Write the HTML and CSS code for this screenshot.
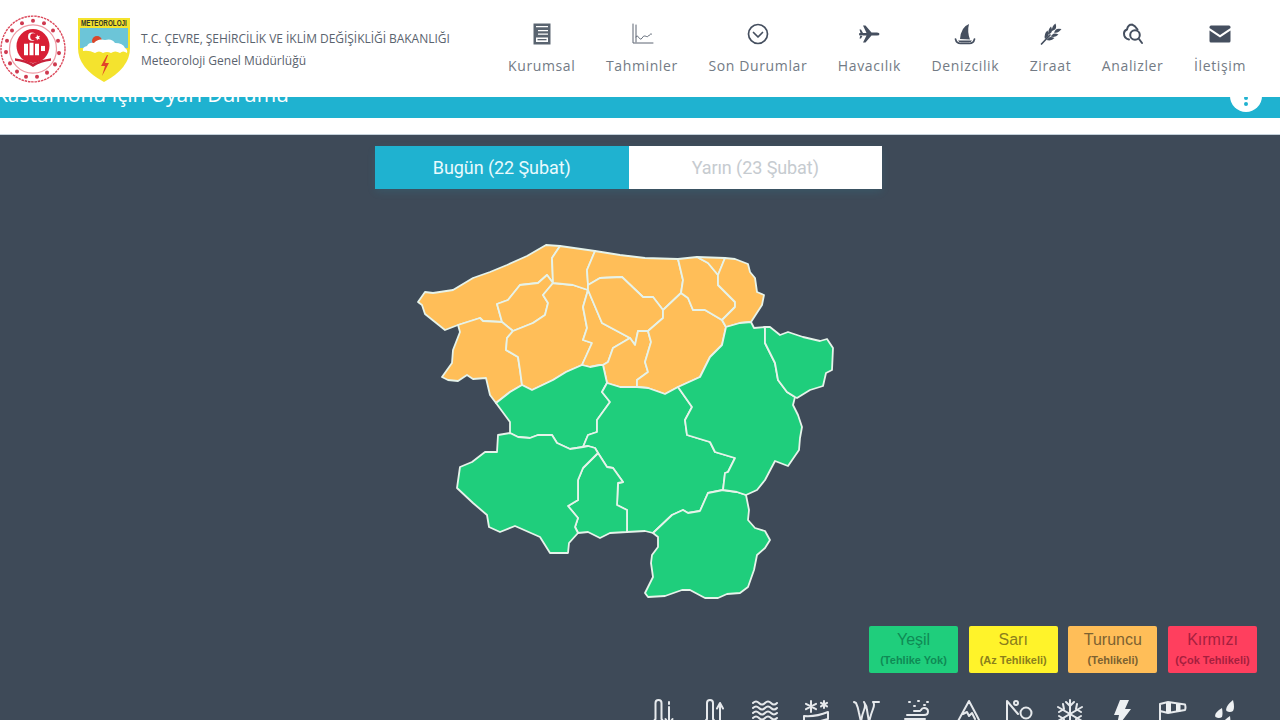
FILE: index.html
```html
<!DOCTYPE html>
<html lang="tr">
<head>
<meta charset="utf-8">
<title>Kastamonu İçin Uyarı Durumu</title>
<link rel="stylesheet" href="styles.css">
</head>
<body>
<header class="site-header">
  <div class="brand">
    <svg class="emblem" viewBox="0 0 66 72" preserveAspectRatio="none" aria-hidden="true">
      <circle cx="33" cy="36" r="32" fill="#fff" stroke="#dc4a5c" stroke-width="1.400" stroke-dasharray="2.500 .8"/>
      <circle cx="33" cy="36" r="23.500" fill="none" stroke="#ee9aa4" stroke-width="1.200"/>
      <g fill="#cf3a50">
        <circle cx="33" cy="8.500" r="2"/><circle cx="44" cy="11" r="2"/><circle cx="53" cy="18" r="2"/><circle cx="58" cy="28" r="2"/><circle cx="59" cy="40" r="2"/><circle cx="55" cy="51" r="2"/><circle cx="47" cy="59" r="2"/><circle cx="37" cy="63" r="2"/><circle cx="26" cy="63" r="2"/><circle cx="17" cy="58" r="2"/><circle cx="10" cy="50" r="2"/><circle cx="6" cy="39" r="2"/><circle cx="7" cy="28" r="2"/><circle cx="12" cy="18" r="2"/><circle cx="22" cy="11" r="2"/>
      </g>
      <circle cx="33" cy="33" r="16.500" fill="#d81f35"/>
      <circle cx="32" cy="24" r="4" fill="#fff"/><circle cx="33.500" cy="24" r="3.300" fill="#d81f35"/>
      <path d="M37 22l1 1.500 2-.5-1 2 1 1.500-2-.3-1 1.500-.3-2-1.700-.7 1.700-.8z" fill="#fff"/>
      <path d="M24 31h4v11h-4zM29.500 30h4v12h-4zM35 31h4v11h-4z" fill="#fff"/>
      <path d="M41 33h4v5h-4z" fill="#fff"/>
      <path d="M15 45q9 1 18 5 9-4 18-5v2.500q-10 1-18 6-8-5-18-6z" fill="#c8213a"/>
    </svg>
    <svg class="shield" viewBox="0 0 52 64" aria-hidden="true">
      <path d="M0 0h52v30q0 20-26 34Q0 50 0 30z" fill="#f4e32e"/>
      <path d="M2 10h48v20H2z" fill="#6cc5d8"/>
      <text class="shield-text" x="37" y="8.500" text-anchor="middle" transform="scale(.7 1)">METEOROLOJI</text>
      <circle cx="19" cy="23" r="5" fill="#d9472b"/>
      <path d="M5 33q-1-4 4-5 2-4 7-3 4-5 11-3 7-2 10 3 8 0 10 5 3 2 2 5-4-3-7 0-5-3-9 0-4-2-8 0-4-3-8 0-6-3-12-2z" fill="#fff"/>
      <path d="M29 37l-6 11h4l-3 10 7-13h-4l3-8z" fill="#e2452a"/>
    </svg>
    <div class="brand-text">
      <div class="ministry">T.C. ÇEVRE, ŞEHİRCİLİK VE İKLİM DEĞİŞİKLİĞİ BAKANLIĞI</div>
      <div class="directorate">Meteoroloji Genel Müdürlüğü</div>
    </div>
  </div>
  <nav class="main-nav">
    <a class="nav-item">
      <svg class="nav-icon" viewBox="0 0 24 24" aria-hidden="true"><path class="fill soft" d="M3.500 1.500h17v21h-17z"/><path class="knock" d="M6 4h12v1.200H6zM8 8h10v1.200H8zM8 11.500h10v1.200H8zM6 15.500h12V20H6z"/><path class="fill soft" d="M7.500 17h9v1.300h-9z"/></svg>
      <span>Kurumsal</span>
    </a>
    <a class="nav-item">
      <svg class="nav-icon" viewBox="0 0 24 24" aria-hidden="true"><path class="line thin" d="M3 2v19h20M6 3v17M6 15c1.500-4 3 3 5 2 2-1 1.500-3 3.500-3s2.500 1.500 4 0 2-2.500 3-2"/></svg>
      <span>Tahminler</span>
    </a>
    <a class="nav-item">
      <svg class="nav-icon" viewBox="0 0 24 24" aria-hidden="true"><circle class="line" cx="12" cy="12" r="9.500"/><path class="line" d="M7.500 10.500l4.500 4.500 4.500-4.500"/></svg>
      <span>Son Durumlar</span>
    </a>
    <a class="nav-item">
      <svg class="nav-icon" viewBox="0 0 24 24" aria-hidden="true"><path class="fill" d="M2 12q0-1 1-1h6.500L6 3.500h2.500L14.500 10.500H20q2.500 0 2.500 1.500T20 13.500h-5.500L8.500 20.500H6l3.500-7H3q-1 0-1-1.500zM2.500 7.500H4L6 11H3.500zM2.500 16.500H4L6 13H3.500z"/></svg>
      <span>Havacılık</span>
    </a>
    <a class="nav-item">
      <svg class="nav-icon" viewBox="0 0 24 24" aria-hidden="true"><path class="fill" d="M16 2Q8 5 7 17l10 .5q-3-8-1-15.500z"/><path class="line" d="M2.500 17q1 4.500 5 4.500h9q4 0 5-4.500"/><path class="fill" d="M5 18.500h14q-1 2-3 2H8q-2 0-3-2z"/></svg>
      <span>Denizcilik</span>
    </a>
    <a class="nav-item">
      <svg class="nav-icon" viewBox="0 0 24 24" aria-hidden="true"><path class="line" d="M2.500 22L11 13"/><path class="fill" d="M6 17q-1.500-5 2.500-8.500 2 4 0 6.500zM7.500 18q5 1.500 8-2-4.500-2-6 0zM9.500 12.500Q8.500 8 12 4.500q2 4 0 6.500zM11.500 14.500q5 1.500 8-2-4.500-2-6 0zM13 9q-.5-5 3.500-7.500 1.500 4-.5 6zM15 10.500q4.500 1 7.500-3.500-4.500-1-6 1z"/></svg>
      <span>Ziraat</span>
    </a>
    <a class="nav-item">
      <svg class="nav-icon bold-icon" viewBox="0 0 24 24" aria-hidden="true"><path class="line" d="M11 2.500q3 1 5.500 5M8 17.500Q3 16.500 3 11.500q0-3 3-4 1-5 5-5"/><circle class="line" cx="14" cy="13" r="4.800"/><path class="line" d="M18 17l3 4"/></svg>
      <span>Analizler</span>
    </a>
    <a class="nav-item">
      <svg class="nav-icon" viewBox="0 0 24 24" aria-hidden="true"><path class="fill" d="M1.500 5q0-1.500 1.500-1.500h18q1.500 0 1.500 1.500v1L12 13 1.500 6zM1.500 8.500L12 15.500l10.500-7V19q0 1.500-1.500 1.500H3q-1.500 0-1.500-1.500z"/></svg>
      <span>İletişim</span>
    </a>
  </nav>
</header>

<main class="page">
  <section class="title-bar">
    <h1 class="title">Kastamonu İçin Uyarı Durumu</h1>
    <span class="info-badge"><i></i><i></i></span>
  </section>
  <div class="title-gap"></div>

  <section class="warning-panel">
    <div class="tabs">
      <button class="tab tab-active">Bugün (22 Şubat)</button>
      <button class="tab">Yarın (23 Şubat)</button>
    </div>

    <svg class="map" viewBox="410 240 430 365" role="img" aria-label="Kastamonu bölgesi uyarı haritası">
      <g class="orange">
        <path d="M418 302L425 292 433 293 453 290 473 278 490 272 507 265 527 256 546 245 560 246 552 258 553 283 547 275 538 283 520 285 508 300 497 304 502 322 483 321 480 318 458 325 445 330 435 322 425 314 422 305Z"/>
        <path d="M553 283L543 295 548 303 545 315 533 323 513 331 502 322 497 304 508 300 520 285 538 283 547 275Z"/>
        <path d="M458 325L480 318 483 321 502 322 513 331 507 338 506 350 518 357 520 370 522 385 510 392 496 403 490 395 486 378 473 379 467 375 458 381 448 380 442 377 452 363 453 350 460 332Z"/>
        <path d="M553 283L573 285 588 290 583 307 587 328 583 340 592 343 582 365 566 372 553 380 532 390 522 385 520 370 518 357 506 350 507 338 513 331 533 323 545 315 548 303 543 295Z"/>
        <path d="M560 246L595 251 587 270 588 285 588 290 573 285 553 283 552 258Z"/>
        <path d="M588 290L602 323 630 338 613 348 608 362 603 365 600 365 590 367 582 365 592 343 583 340 587 328 583 307Z"/>
        <path d="M595 251L620 255 645 258 678 259 683 280 681 293 663 310 653 297 643 297 622 277 600 278 588 285 587 270Z"/>
        <path d="M588 285L600 278 622 277 643 297 653 297 663 310 663 318 648 331 638 331 635 345 630 338 602 323 588 290Z"/>
        <path d="M630 338L635 345 638 331 648 331 651 342 645 362 648 372 637 380 637 387 620 387 607 383 603 365 608 362 613 348Z"/>
        <path d="M663 310L681 293 688 298 693 310 705 310 722 320 726 327 722 345 710 357 700 377 678 387 665 394 648 388 637 387 637 380 648 372 645 362 651 342 648 331 663 318Z"/>
        <path d="M678 259L697 257 708 263 718 275 718 285 735 302 735 307 722 320 705 310 693 310 688 298 681 293 683 280Z"/>
        <path d="M697 257L725 258 718 275 708 263Z"/>
        <path d="M725 258L735 259 748 264 750 272 755 278 757 292 764 295 762 305 751 322 740 323 726 327 722 320 735 307 735 302 718 285 718 275Z"/>
      </g>
      <g class="green">
        <path d="M496 403L510 392 522 385 532 390 553 380 566 372 582 365 590 367 600 365 603 365 607 383 602 392 610 402 597 420 597 432 588 435 583 447 570 449 557 443 552 435 538 435 530 438 518 437 510 433 510 422Z"/>
        <path d="M607 383L620 387 637 387 648 388 665 394 678 387 692 407 685 420 687 435 710 442 715 452 735 458 728 472 725 473 723 490 708 493 700 511 688 513 683 510 672 515 653 533 645 531 627 532 627 510 617 505 618 483 623 482 613 468 607 467 598 453 595 448 588 446 583 447 588 435 597 432 597 420 610 402 602 392Z"/>
        <path d="M598 453L583 468 578 480 578 500 568 506 578 518 575 527 578 533 588 532 600 538 610 533 627 532 627 510 617 505 618 483 623 482 613 468 607 467Z"/>
        <path d="M510 433L498 435 497 452 485 452 472 462 460 467 457 488 473 503 487 515 489 527 500 532 515 526 540 537 550 553 568 553 569 543 578 533 575 527 578 518 568 506 578 500 578 480 583 468 598 453 595 448 588 446 583 447 570 449 557 443 552 435 538 435 530 438 518 437Z"/>
        <path d="M653 533L672 515 683 510 688 513 700 511 708 493 723 490 737 492 746 495 749 510 748 520 755 528 765 531 770 540 765 548 757 555 754 570 748 587 740 593 727 594 718 598 705 598 690 590 682 590 665 596 648 597 645 593 653 577 651 563 652 555 658 547 658 537Z"/>
        <path d="M726 327L740 323 751 322 754 328 765 327 765 343 775 363 778 380 787 392 795 397 793 405 798 415 802 427 800 438 799 450 788 466 775 461 765 480 757 490 746 495 737 492 723 490 725 473 728 472 735 458 715 452 710 442 687 435 685 420 692 407 678 387 700 377 710 357 722 345Z"/>
        <path d="M765 327L770 327 780 335 788 332 803 337 820 341 827 339 833 348 832 370 826 373 823 386 810 390 797 398 795 397 787 392 778 380 775 363 765 343Z"/>
      </g>
    </svg>

    <div class="legend">
      <div class="level level-green"><strong>Yeşil</strong><small>(Tehlike Yok)</small></div>
      <div class="level level-yellow"><strong>Sarı</strong><small>(Az Tehlikeli)</small></div>
      <div class="level level-orange"><strong>Turuncu</strong><small>(Tehlikeli)</small></div>
      <div class="level level-red"><strong>Kırmızı</strong><small>(Çok Tehlikeli)</small></div>
    </div>

    <div class="hazards">
      <svg viewBox="0 0 30 30" aria-hidden="true"><path d="M7.500 20V4q0-3 3-3t3 3v16q3 3 0 6.500h-6Q4.500 23 7.500 20z"/><path d="M21 3v2M21 8v16M17.500 20l3.500 5 3.500-5"/></svg>
      <svg viewBox="0 0 30 30" aria-hidden="true"><path d="M8 20V4q0-3 3-3t3 3v16q3 3 0 6.500H8Q5 23 8 20z"/><path d="M21 26V6M18 9.500L21 4l3 5.500"/></svg>
      <svg viewBox="0 0 30 30" aria-hidden="true"><path d="M3 4q3-3 6 0t6 0 6 0 6 0M3 9q3-3 6 0t6 0 6 0 6 0M3 14q3-3 6 0t6 0 6 0 6 0M3 19q3-3 6 0t6 0 6 0 6 0"/></svg>
      <svg viewBox="0 0 30 30" aria-hidden="true"><path d="M10 2v11M5 4.800l10 5.400M15 4.800L5 10.200M23 2v7M20 3.800l6 3.600M26 3.800l-6 3.600M3 17q12 1 24-4v7q-12 4-24 3zM3 24v6"/></svg>
      <svg viewBox="0 0 30 30" aria-hidden="true"><path d="M2 3l2 1q2 4 3 10l2 9q1-7 3-12t0-8M12 3q3 4 3 8l2 12q2-8 4-13t0-7l6 0"/></svg>
      <svg viewBox="0 0 30 30" aria-hidden="true"><path d="M4 16h17q4 0 4-3.500T21 9q-2 0-3 2M2 20h20M8 24h16q2 0 2 2M11 12h6M6 3h1M15 2h1M24 3h1M11 7h1M21 6h1"/></svg>
      <svg viewBox="0 0 30 30" aria-hidden="true"><path d="M3 24L15 2l8 15 5 10M9 15l4-2 2 4 3-3 3 6M3 28h25"/></svg>
      <svg viewBox="0 0 30 30" aria-hidden="true"><path d="M3 26V2l11 13"/><circle cx="12" cy="4" r="2"/><circle cx="22" cy="14" r="5.500"/></svg>
      <svg viewBox="0 0 30 30" aria-hidden="true"><path d="M15 1v28M3 8l24 14M27 8L3 22M11 3l4 4 4-4M11 27l4-4 4 4M4 13l5-3-1-5M26 17l-5 3 1 5M26 13l-5-3 1-5M4 17l5 3-1 5"/></svg>
      <svg viewBox="0 0 30 30" aria-hidden="true"><path class="solid" d="M14 1h9l-4 9h6L10 30l3-14H8z"/></svg>
      <svg viewBox="0 0 30 30" aria-hidden="true"><path d="M3 29V5l8-2 17 2.500q1 3 0 5.500L11 14l-8-2"/><path class="solid" d="M9 3.500h5v10.500H9zM19 5h4.500v7.500H19z"/></svg>
      <svg viewBox="0 0 30 30" aria-hidden="true"><path class="solid" d="M25 1q2 8 0 11-3 2-6.500 0-2-4 6.500-11zM14 9q1 6 0 9-3 2-6.500 0-2-4 6.500-9zM22 17q1 7-.5 10-3 2-7 0-1.500-4 7.500-10z"/></svg>
    </div>
  </section>
</main>
</body>
</html>
```

FILE: styles.css
```css
* { box-sizing: border-box; }

html, body {
  margin: 0;
  height: 720px;
  overflow: hidden;
  background: #fff;
  font-family: "Open Sans", "Liberation Sans", sans-serif;
}

.site-header {
  position: fixed;
  top: 0;
  left: 0;
  right: 0;
  height: 97px;
  z-index: 10;
  display: flex;
  justify-content: space-between;
  background: #fff;
}

.brand {
  display: flex;
  align-items: flex-start;
}

.emblem {
  width: 66px;
  height: 74px;
  margin-top: 12px;
}

.shield {
  width: 52px;
  height: 64px;
  margin: 18px 0 0 12px;
}

.shield-text {
  font-family: "Liberation Sans", sans-serif;
  font-size: 9px;
  font-weight: 700;
  fill: #33352a;
}

.brand-text {
  margin: 30px 0 0 11px;
  color: #5a636e;
}

.ministry {
  font-size: 12px;
  line-height: 17px;
  letter-spacing: -0.04px;
  white-space: nowrap;
}

.directorate {
  margin-top: 6px;
  font-size: 12px;
  line-height: 16px;
  white-space: nowrap;
}

.main-nav {
  display: flex;
  gap: 30.500px;
  margin: 22px 34px 0 0;
}

.nav-item {
  display: flex;
  flex-direction: column;
  align-items: center;
  color: #737b85;
  font-size: 14px;
  line-height: 20px;
  letter-spacing: 0.63px;
  white-space: nowrap;
}

.nav-icon {
  width: 24px;
  height: 24px;
  margin-bottom: 10px;
}

.nav-icon .fill { fill: #454f5f; }
.nav-icon .soft { fill: #5a6470; }
.nav-icon .knock { fill: #fff; }
.nav-icon .line {
  fill: none;
  stroke: #454f5f;
  stroke-width: 1.700;
  stroke-linecap: round;
  stroke-linejoin: round;
}
.nav-icon .thin { stroke-width: 1; stroke: #5c6573; }
.bold-icon .line { stroke-width: 2; }

.title-bar {
  display: flex;
  justify-content: space-between;
  align-items: flex-end;
  height: 118px;
  background: #1fb2d0;
  padding: 0 18px 12px 0;
}

.title {
  margin: 0 0 0 -5px;
  color: #fff;
  font-size: 21px;
  font-weight: 400;
  line-height: 24px;
  letter-spacing: -0.05px;
  white-space: nowrap;
}

.info-badge {
  display: flex;
  flex-direction: column;
  align-items: center;
  justify-content: flex-end;
  gap: 2px;
  width: 32px;
  height: 32px;
  margin-bottom: -6px;
  padding-bottom: 6px;
  border-radius: 50%;
  background: #fff;
}

.info-badge i {
  width: 4px;
  height: 4px;
  border-radius: 50%;
  background: #1fb2d0;
}

.title-gap {
  height: 17px;
  background: #fff;
  border-bottom: 1px solid #c3d0da;
}

.warning-panel {
  height: 700px;
  padding-top: 11px;
  background: #3e4a58;
}

.tabs {
  display: flex;
  width: 507px;
  height: 43px;
  margin-left: 375px;
  box-shadow: 0 3px 8px rgba(31, 178, 208, 0.12);
}

.tab {
  flex: 1;
  border: 0;
  padding: 0;
  background: #fff;
  color: #c6cbd0;
  font-family: Roboto, "Liberation Sans", sans-serif;
  font-size: 18px;
  letter-spacing: -0.08px;
}

.tab-active {
  background: #1fb2d0;
  color: #e9fafd;
}

.map {
  display: block;
  width: 430px;
  height: 365px;
  margin: 51px 0 0 410px;
}

.map path {
  stroke: #e6f3ea;
  stroke-width: 1.800;
  stroke-linejoin: round;
}

.orange path { fill: #ffbe58; }
.green path { fill: #1fce7c; }

.legend {
  display: flex;
  justify-content: flex-end;
  gap: 10.670px;
  margin-top: 21px;
  padding-right: 23px;
}

.level {
  display: flex;
  flex-direction: column;
  align-items: center;
  width: 89px;
  height: 47px;
  padding-top: 4px;
  border-radius: 2px;
  font-family: "Liberation Sans", sans-serif;
  white-space: nowrap;
}

.level strong {
  font-size: 16px;
  font-weight: 400;
  line-height: 19px;
}

.level small {
  margin-top: 5px;
  font-size: 11px;
  font-weight: 700;
  line-height: 13px;
}

.level-green { background: #1fce7c; color: #0f8a55; }
.level-yellow { background: #fff32a; color: #8a7f1c; }
.level-orange { background: #ffbe58; color: #7c6231; }
.level-red { background: #ff3f5e; color: #a61f3e; }

.hazards {
  display: flex;
  justify-content: flex-end;
  gap: 20.900px;
  margin-top: 26px;
  padding-right: 42px;
}

.hazards svg {
  width: 30px;
  height: 30px;
  flex: none;
}

.hazards path,
.hazards circle {
  fill: none;
  stroke: #e6e9ec;
  stroke-width: 2;
  stroke-linecap: round;
  stroke-linejoin: round;
}

.hazards .solid {
  fill: #eef1f3;
  stroke: none;
}
```
